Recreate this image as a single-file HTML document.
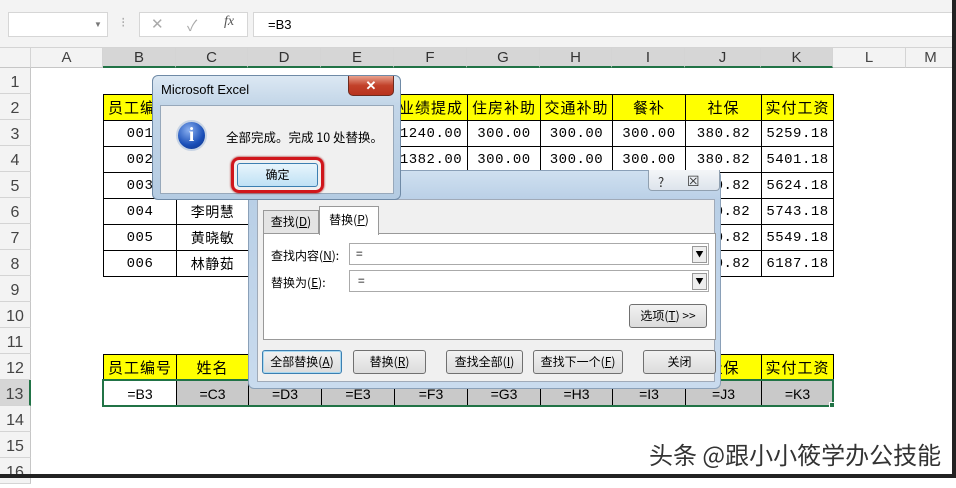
<!DOCTYPE html>
<html><head><meta charset="utf-8"><style>
*{margin:0;padding:0;box-sizing:border-box}
body{width:956px;height:478px;overflow:hidden;background:#fff;font-family:"Liberation Sans","Noto Sans CJK SC",sans-serif;position:relative}
.abs{position:absolute}
.top{left:0;top:0;width:956px;height:48px;background:#f3f3f3;border-bottom:1px solid #d4d4d4}
.box{background:#fff;border:1px solid #d6d6d6}
.colh{top:48px;height:20px;background:#f3f3f3;border-right:1px solid #d4d4d4;border-bottom:1px solid #c6c6c6;font-size:15px;color:#444;text-align:center;line-height:20px}
.colh.sel{background:#d6d6d6;border-bottom:2px solid #217346;color:#333}
.rowh{left:0;width:31px;height:26px;background:#f3f3f3;border-bottom:1px solid #d4d4d4;border-right:1px solid #c6c6c6;font-size:16px;color:#444;text-align:center;line-height:30px}
table{position:absolute;border-collapse:collapse;table-layout:fixed}
td{border:1px solid #000;height:26px;text-align:center;font-size:14px;letter-spacing:0.5px;font-family:"Liberation Mono","Noto Sans CJK SC",monospace;padding:0;white-space:nowrap;overflow:hidden}
tr.h td{background:#ffff00;font-family:"Noto Sans CJK SC",sans-serif;font-size:15px;letter-spacing:1px}
tr.g td{background:#c9c9c9;font-family:"Liberation Sans",sans-serif;font-size:14px;letter-spacing:0}
tr.g td:first-child{background:#fff}
.dlg{font-family:"Noto Sans CJK SC","Liberation Sans",sans-serif;font-size:12px;color:#000}
.btn{position:absolute;height:24px;border:1px solid #707070;border-radius:3px;background:linear-gradient(#f2f2f2,#dcdcdc);text-align:center;line-height:22px;font-size:12px}
</style></head><body>
<div class="abs top"></div>
<div class="abs box" style="left:8px;top:12px;width:100px;height:25px"></div>
<div class="abs" style="left:94px;top:20px;font-size:8px;color:#777">▼</div>
<div class="abs" style="left:121px;top:14px;color:#aaa;font-size:14px">⁝</div>
<div class="abs box" style="left:139px;top:12px;width:109px;height:25px"></div>
<div class="abs" style="left:151px;top:15px;color:#aaa;font-size:15px">✕</div>
<div class="abs" style="left:187px;top:15px;color:#aaa;font-size:15px">✓</div>
<div class="abs" style="left:224px;top:14px;color:#555;font-size:14px;font-style:italic;font-family:'Liberation Serif',serif">fx</div>
<div class="abs box" style="left:253px;top:12px;width:710px;height:25px;font-size:13px;line-height:23px;padding-left:14px">=B3</div>

<div class="abs colh" style="left:0;width:31px"></div>
<div class="abs colh" style="left:31px;width:72px">A</div>
<div class="abs colh sel" style="left:103px;width:73px">B</div>
<div class="abs colh sel" style="left:176px;width:72px">C</div>
<div class="abs colh sel" style="left:248px;width:73px">D</div>
<div class="abs colh sel" style="left:321px;width:73px">E</div>
<div class="abs colh sel" style="left:394px;width:73px">F</div>
<div class="abs colh sel" style="left:467px;width:73px">G</div>
<div class="abs colh sel" style="left:540px;width:72px">H</div>
<div class="abs colh sel" style="left:612px;width:73px">I</div>
<div class="abs colh sel" style="left:685px;width:76px">J</div>
<div class="abs colh sel" style="left:761px;width:72px">K</div>
<div class="abs colh" style="left:833px;width:73px">L</div>
<div class="abs colh" style="left:906px;width:50px">M</div>

<div class="abs rowh" style="top:68px">1</div>
<div class="abs rowh" style="top:94px">2</div>
<div class="abs rowh" style="top:120px">3</div>
<div class="abs rowh" style="top:146px">4</div>
<div class="abs rowh" style="top:172px">5</div>
<div class="abs rowh" style="top:198px">6</div>
<div class="abs rowh" style="top:224px">7</div>
<div class="abs rowh" style="top:250px">8</div>
<div class="abs rowh" style="top:276px">9</div>
<div class="abs rowh" style="top:302px">10</div>
<div class="abs rowh" style="top:328px">11</div>
<div class="abs rowh" style="top:354px">12</div>
<div class="abs rowh" style="top:380px;background:#d6d6d6;border-right:2px solid #217346">13</div>
<div class="abs rowh" style="top:406px">14</div>
<div class="abs rowh" style="top:432px">15</div>
<div class="abs rowh" style="top:458px">16</div>

<table style="left:103px;top:94px">
<colgroup><col style="width:73px"><col style="width:72px"><col style="width:73px"><col style="width:73px"><col style="width:73px"><col style="width:73px"><col style="width:72px"><col style="width:73px"><col style="width:76px"><col style="width:72px"></colgroup>
<tr class="h"><td>员工编号</td><td>姓名</td><td>部门</td><td>基本工资</td><td>业绩提成</td><td>住房补助</td><td>交通补助</td><td>餐补</td><td>社保</td><td>实付工资</td></tr>
<tr><td>001</td><td>王小明</td><td>销售</td><td>3500.00</td><td>1240.00</td><td>300.00</td><td>300.00</td><td>300.00</td><td>380.82</td><td>5259.18</td></tr>
<tr><td>002</td><td>张丽</td><td>销售</td><td>3500.00</td><td>1382.00</td><td>300.00</td><td>300.00</td><td>300.00</td><td>380.82</td><td>5401.18</td></tr>
<tr><td>003</td><td>赵刚</td><td>销售</td><td>3500.00</td><td>1605.00</td><td>300.00</td><td>300.00</td><td>300.00</td><td>380.82</td><td>5624.18</td></tr>
<tr><td>004</td><td>李明慧</td><td>销售</td><td>3500.00</td><td>1724.00</td><td>300.00</td><td>300.00</td><td>300.00</td><td>380.82</td><td>5743.18</td></tr>
<tr><td>005</td><td>黄晓敏</td><td>销售</td><td>3500.00</td><td>1530.00</td><td>300.00</td><td>300.00</td><td>300.00</td><td>380.82</td><td>5549.18</td></tr>
<tr><td>006</td><td>林静茹</td><td>销售</td><td>3500.00</td><td>2168.00</td><td>300.00</td><td>300.00</td><td>300.00</td><td>380.82</td><td>6187.18</td></tr>
</table>
<table style="left:103px;top:354px">
<colgroup><col style="width:73px"><col style="width:72px"><col style="width:73px"><col style="width:73px"><col style="width:73px"><col style="width:73px"><col style="width:72px"><col style="width:73px"><col style="width:76px"><col style="width:72px"></colgroup>
<tr class="h"><td>员工编号</td><td>姓名</td><td>部门</td><td>基本工资</td><td>业绩提成</td><td>住房补助</td><td>交通补助</td><td>餐补</td><td>社保</td><td>实付工资</td></tr>
<tr class="g"><td>=B3</td><td>=C3</td><td>=D3</td><td>=E3</td><td>=F3</td><td>=G3</td><td>=H3</td><td>=I3</td><td>=J3</td><td>=K3</td></tr>
</table>
<div class="abs" style="left:102px;top:379px;width:732px;height:28px;border:2px solid #217346"></div>
<div class="abs" style="left:829px;top:402px;width:6px;height:6px;background:#217346;border:1px solid #fff"></div>

<!-- find/replace dialog -->
<div class="abs dlg" style="left:248px;top:170px;width:473px;height:219px;border:1px solid #8aa0b8;border-radius:6px;background:linear-gradient(#cfe0f0,#b9cfe6 30px,#c9dbee);">
  <div class="abs" style="left:399px;top:-1px;width:72px;height:21px;border:1px solid #90a0b0;border-top:none;border-radius:0 0 4px 4px;background:linear-gradient(#f4f6f8,#dde4ec)"></div>
  <div class="abs" style="left:409px;top:1px;font-size:13px;color:#333">?</div>
  <div class="abs" style="left:438px;top:0px;font-size:14px;color:#333">☒</div>
  <div class="abs" style="left:8px;top:28px;width:458px;height:183px;background:#f0f0f0;border:1px solid #a0aab8"></div>
  <div class="abs" style="left:14px;top:39px;width:56px;height:24px;background:#e4e4e4;border:1px solid #999;border-bottom:none;line-height:22px;text-align:center">查找(<u>D</u>)</div>
  <div class="abs" style="left:70px;top:35px;width:60px;height:29px;background:#fff;border:1px solid #999;border-bottom:none;line-height:26px;text-align:center;z-index:2">替换(<u>P</u>)</div>
  <div class="abs" style="left:14px;top:62px;width:453px;height:107px;background:#fff;border:1px solid #999"></div>
  <div class="abs" style="left:22px;top:76px">查找内容(<u>N</u>):</div>
  <div class="abs" style="left:100px;top:72px;width:360px;height:22px;border:1px solid #aaa;background:#fff;padding-left:6px;line-height:20px">=</div>
  <div class="abs" style="left:443px;top:75px;width:15px;height:17px;border:1px solid #999;background:#eee;font-size:8px;text-align:center;line-height:16px">▼</div>
  <div class="abs" style="left:22px;top:103px">替换为(<u>E</u>):</div>
  <div class="abs" style="left:100px;top:99px;width:360px;height:22px;border:1px solid #aaa;background:#fff;padding-left:8px;line-height:20px">=</div>
  <div class="abs" style="left:443px;top:102px;width:15px;height:17px;border:1px solid #999;background:#eee;font-size:8px;text-align:center;line-height:16px">▼</div>
  <div class="btn" style="left:380px;top:133px;width:78px">选项(<u>T</u>) &gt;&gt;</div>
  <div class="btn" style="left:13px;top:179px;width:80px;border-color:#3c7fb1;box-shadow:0 0 0 1px #a8d8f0 inset">全部替换(<u>A</u>)</div>
  <div class="btn" style="left:104px;top:179px;width:73px">替换(<u>R</u>)</div>
  <div class="btn" style="left:197px;top:179px;width:77px">查找全部(<u>I</u>)</div>
  <div class="btn" style="left:284px;top:179px;width:90px">查找下一个(<u>F</u>)</div>
  <div class="btn" style="left:394px;top:179px;width:73px">关闭</div>
</div>

<!-- message box -->
<div class="abs dlg" style="left:152px;top:75px;width:249px;height:125px;border:1px solid #6f8aa6;border-radius:6px;background:linear-gradient(#dce8f3,#c3d6e8 28px,#b4cbe2)">
  <div class="abs" style="left:8px;top:6px;font-size:13px;font-family:'Liberation Sans',sans-serif">Microsoft Excel</div>
  <div class="abs" style="left:195px;top:0;width:46px;height:20px;border-radius:0 0 5px 5px;background:linear-gradient(#e8a08c,#c2412a 50%,#b8331e);border:1px solid #6d2b1f;border-top:none;color:#fff;text-align:center;font-weight:bold;font-size:13px;line-height:18px">✕</div>
  <div class="abs" style="left:7px;top:29px;width:234px;height:89px;background:#f0f0f0;border:1px solid #97a8ba"></div>
  <div class="abs" style="left:23px;top:44px;width:31px;height:31px;border-radius:50%;background:radial-gradient(circle at 40% 30%,#8ab0f0,#1a4fb8 60%,#0f2f80);border:2px solid #c8d4e4;color:#fff;font-weight:bold;font-family:'Liberation Serif',serif;text-align:center;line-height:26px;font-size:20px">i</div>
  <div class="abs" style="left:73px;top:51px;font-size:12.5px">全部完成。完成 10 处替换。</div>
  <div class="abs" style="left:78px;top:81px;width:93px;height:36px;border:3px solid #d0161c;border-radius:8px;box-shadow:0 0 2px #900"></div>
  <div class="abs" style="left:84px;top:87px;width:81px;height:24px;border:1px solid #3c7fb1;border-radius:3px;background:linear-gradient(#e8f5fc,#bfe1f5);text-align:center;line-height:22px">确定</div>
</div>

<div class="abs" style="left:649px;top:436px;font-size:24px;color:#333;font-family:'Noto Sans CJK SC',sans-serif;text-shadow:0 0 3px #fff;white-space:nowrap">头条 @跟小小筱学办公技能</div>
<div class="abs" style="left:0;top:474px;width:956px;height:4px;background:#222"></div>
<div class="abs" style="left:952px;top:0;width:4px;height:478px;background:#222"></div>
</body></html>
